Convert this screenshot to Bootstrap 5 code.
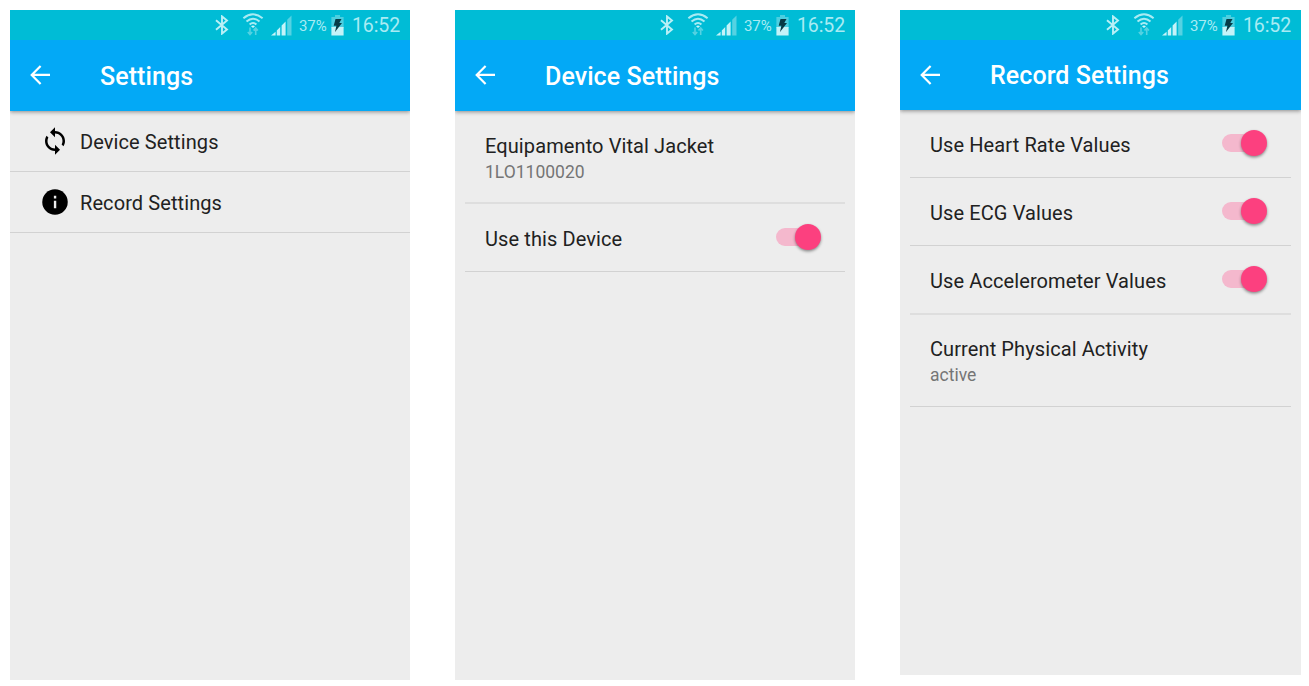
<!DOCTYPE html>
<html lang="en">
<head>
<meta charset="utf-8">
<title>Settings</title>
<meta name="viewport" content="width=device-width, initial-scale=1">
<link href="https://cdn.jsdelivr.net/npm/bootstrap@5.3.0/dist/css/bootstrap.min.css" rel="stylesheet">
<style>
body { font-family: Roboto, sans-serif; background: #fff; color: #212121; overflow: hidden; }
.screens { padding: 10px 8px 0 10px; gap: 45px; }
.phone { width: 400px; height: 670px; background: #ededed; flex: none; }
.phone.short { width: 401px; height: 665px; }
.status { height: 30px; background: #00bcd6; color: #a9ebf3; padding-right: 10px; }
.status svg { flex: none; }
.i-wifi { margin-left: 13px; }
.i-signal { margin-left: 7px; }
.i-batt { margin-left: 4px; }
.pct { font-size: 15px; line-height: 30px; width: 28px; margin-left: 7px; padding-top: 2px; letter-spacing: -.1px; }
.clock { font-size: 19.5px; line-height: 30px; width: 48px; margin-left: 8px; padding-top: 2px; white-space: nowrap; letter-spacing: -.1px; }
.appbar { height: 71px; background: #03a9f6; color: #fff; box-shadow: 0 1px 4px rgba(0,0,0,.42); padding-left: 20px; clip-path: inset(0 0 -8px 0); }
.short .appbar { height: 70px; }
.appbar svg { margin-top: -1px; }
.short .appbar svg { margin-top: 0; }
.appbar h1 { font-size: 25px; font-weight: 500; line-height: 30px; margin: 0 0 0 50px; padding-top: 2px; letter-spacing: .07px; }
.menu-row { height: 61px; border-bottom: 1px solid #d2d2d2; padding-left: 30px; font-size: 20px; letter-spacing: .09px; }
.menu-row svg { margin-right: 10px; }
.menu-row span { padding-top: 1px; }
.pref { margin: 0 10px; padding: 0 24px 0 20px; border-bottom: 1px solid #d2d2d2; height: 68px; font-size: 20px; line-height: 26px; letter-spacing: .1px; }
.pref > span:first-child { padding-top: 2px; }
.pref.two { height: 92px; padding-top: 2px; }
.pref.thick { border-bottom: 2px solid #dedede; height: 69px; }
.pref.two.thick { height: 93px; padding-top: 4px; }
.sub { font-size: 17.5px; color: #757575; line-height: 26px; letter-spacing: 0; }
.toggle { width: 45px; height: 26px; margin-top: -1px; }
.toggle::before { content: ""; flex: none; width: 36px; height: 18px; border-radius: 9px; background: #f4b8cd; margin-right: -17px; }
.toggle i { width: 26px; height: 26px; border-radius: 50%; background: #fc407f; box-shadow: 0 1.5px 3px rgba(0,0,0,.42); flex: none; }
</style>
</head>
<body>
<svg class="d-none">
  <symbol id="bt" viewBox="0 0 14 20"><path d="M1 5.2 12 14.4 7 18.6V1.4l5 4.2L1 14.8" fill="none" stroke="#b9f0f6" stroke-width="1.9"/></symbol>
  <symbol id="wifi" viewBox="0 0 22 24">
    <g fill="none" stroke="#a9ebf3" stroke-width="2"><path d="M1.4 5.2Q11-2.6 20.6 5.2M4.5 8.6Q11 2.8 17.5 8.6M7.6 11.6Q11 8.4 14.4 11.6"/></g>
    <path d="M9 13.3Q11 11.8 13 13.3L11 15Z" fill="#c9f5f9"/>
    <g fill="none" stroke="#55d2e2" stroke-width="1.6"><path d="M8 14.5v7M5.8 19 8 21.5 10.2 19M13.7 22v-7M11.5 17.5l2.2-2.5 2.2 2.5"/></g>
  </symbol>
  <symbol id="signal" viewBox="0 0 21 21"><path d="M0 20.5 4.6 16.7v3.8ZM5.8 15.5 9.2 12v8.5H5.8ZM10.6 10.6l4-4v13.9h-4Z" fill="#c4f3f8"/><path d="M16.2 4.8 20.5.5v20h-4.3Z" fill="#55d2e2"/></symbol>
  <symbol id="batt" viewBox="0 0 13 21"><path d="M4 0h5v2h3.6v11H.4V2H4Z" fill="#4ccfe0"/><path d="M.4 12h12.2v8.5H.4Z" fill="#c4f3f8"/><path d="M4.5 4h6L8.3 8h2.7L4 17l1.4-6.2H2.7Z" fill="#073b46"/></symbol>
  <symbol id="back" viewBox="0 0 20 20"><path d="M10.6.9 1.7 9.9l8.9 9M1.7 9.9H20" fill="none" stroke="#fff" stroke-width="2.2"/></symbol>
  <symbol id="sync" viewBox="0 0 24 24"><path d="M12 4V1L8 5l4 4V6c3.31 0 6 2.69 6 6 0 1.01-.25 1.97-.7 2.8l1.46 1.46C19.54 15.03 20 13.57 20 12c0-4.42-3.58-8-8-8zm0 14c-3.31 0-6-2.69-6-6 0-1.01.25-1.97.7-2.8L5.24 7.74C4.46 8.97 4 10.43 4 12c0 4.42 3.58 8 8 8v3l4-4-4-4v3z"/></symbol>
  <symbol id="info" viewBox="0 0 24 24"><circle cx="12" cy="12" r="10.2"/><path d="M11.1 11h1.9v6h-1.9zM11.1 7h1.9v2.1h-1.9z" fill="#ededed"/></symbol>
</svg>

<main class="screens d-flex align-items-start">
  <section class="phone">
    <div class="status d-flex align-items-center justify-content-end">
      <svg width="14" height="20"><use href="#bt"/></svg><svg class="i-wifi" width="22" height="24"><use href="#wifi"/></svg><svg class="i-signal" width="21" height="21"><use href="#signal"/></svg>
      <span class="pct">37%</span><svg class="i-batt" width="13" height="21"><use href="#batt"/></svg><span class="clock">16:52</span>
    </div>
    <header class="appbar d-flex align-items-center"><svg width="20" height="20"><use href="#back"/></svg><h1>Settings</h1></header>
    <div class="menu-row d-flex align-items-center"><svg width="30" height="30"><use href="#sync"/></svg><span>Device Settings</span></div>
    <div class="menu-row d-flex align-items-center"><svg width="30" height="30"><use href="#info"/></svg><span>Record Settings</span></div>
  </section>

  <section class="phone">
    <div class="status d-flex align-items-center justify-content-end">
      <svg width="14" height="20"><use href="#bt"/></svg><svg class="i-wifi" width="22" height="24"><use href="#wifi"/></svg><svg class="i-signal" width="21" height="21"><use href="#signal"/></svg>
      <span class="pct">37%</span><svg class="i-batt" width="13" height="21"><use href="#batt"/></svg><span class="clock">16:52</span>
    </div>
    <header class="appbar d-flex align-items-center"><svg width="20" height="20"><use href="#back"/></svg><h1>Device Settings</h1></header>
    <div class="pref two thick d-flex flex-column justify-content-center"><div>Equipamento Vital Jacket</div><div class="sub">1LO1100020</div></div>
    <div class="pref d-flex align-items-center justify-content-between"><span>Use this Device</span><span class="toggle d-flex align-items-center"><i></i></span></div>
  </section>

  <section class="phone short">
    <div class="status d-flex align-items-center justify-content-end">
      <svg width="14" height="20"><use href="#bt"/></svg><svg class="i-wifi" width="22" height="24"><use href="#wifi"/></svg><svg class="i-signal" width="21" height="21"><use href="#signal"/></svg>
      <span class="pct">37%</span><svg class="i-batt" width="13" height="21"><use href="#batt"/></svg><span class="clock">16:52</span>
    </div>
    <header class="appbar d-flex align-items-center"><svg width="20" height="20"><use href="#back"/></svg><h1>Record Settings</h1></header>
    <div class="pref d-flex align-items-center justify-content-between"><span>Use Heart Rate Values</span><span class="toggle d-flex align-items-center"><i></i></span></div>
    <div class="pref d-flex align-items-center justify-content-between"><span>Use ECG Values</span><span class="toggle d-flex align-items-center"><i></i></span></div>
    <div class="pref thick d-flex align-items-center justify-content-between"><span>Use Accelerometer Values</span><span class="toggle d-flex align-items-center"><i></i></span></div>
    <div class="pref two d-flex flex-column justify-content-center"><div>Current Physical Activity</div><div class="sub">active</div></div>
  </section>
</main>
<script src="https://cdn.jsdelivr.net/npm/bootstrap@5.3.0/dist/js/bootstrap.bundle.min.js"></script>
</body>
</html>
